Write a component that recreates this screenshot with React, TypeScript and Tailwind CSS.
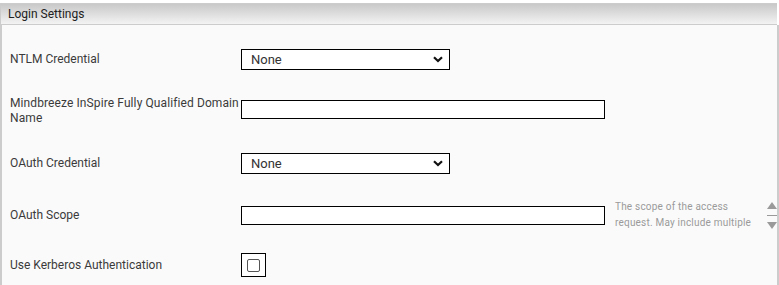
import React from "react";

const Chevron = () => (
  <svg width="10" height="7" viewBox="0 0 10 7" className="pointer-events-none absolute right-[6px] top-[6px]">
    <path d="M1 1.2 L5 5 L9 1.2" fill="none" stroke="#111" strokeWidth="2.2" />
  </svg>
);

const SelectBox = () => (
  <div className="relative flex h-[21px] w-[209px] items-center border border-black bg-white pl-[9px] text-[13px] leading-[19px] text-[#333]">
    None
    <Chevron />
  </div>
);

const TextBox = () => (
  <input type="text" className="h-[19px] w-[364px] border border-black bg-white outline-none" />
);

const Row = ({
  label,
  children,
  height = "h-[52px]",
}: {
  label: React.ReactNode;
  children: React.ReactNode;
  height?: string;
}) => (
  <div className={`flex items-center ${height}`}>
    <div className="w-[231px] shrink-0 text-[12px] leading-[15px] text-[#3a3a3a]">{label}</div>
    {children}
  </div>
);

export default function App() {
  return (
    <div className="h-[285px] w-[779px] bg-white font-['Roboto',sans-serif]">
      <div className="flex h-full flex-col pt-[3px]">
        <div className="mr-[2px] h-[22px] border-y border-l border-[#cccccc] bg-gradient-to-b from-[#c9c9c9] to-[#f3f3f3] pl-[7px] text-[12px] leading-[20px] text-[#222]">
          Login Settings
        </div>
        <div className="flex-1 overflow-hidden border-l-2 border-r-2 border-[#cccccc] bg-[#fafafa] pl-[8px] pt-[8px]">
          <Row label="NTLM Credential">
            <SelectBox />
          </Row>
          <Row
            label={
              <span className="-mt-[1px] block w-[240px] tracking-[0.1px]">
                Mindbreeze InSpire Fully Qualified Domain
                <br />
                Name
              </span>
            }
          >
            <div className="-mt-[4px]">
              <TextBox />
            </div>
          </Row>
          <Row label="OAuth Credential">
            <SelectBox />
          </Row>
          <Row label="OAuth Scope">
            <div className="flex items-center">
              <TextBox />
              <div className="ml-[10px] w-[138px] text-[10px] leading-[16px] tracking-[0.2px] text-[#9a9a9a]">
                The scope of the access request. May include multiple
              </div>
              <div className="ml-[14px] flex flex-col items-center gap-[6px]">
                <svg width="10" height="7" viewBox="0 0 10 7">
                  <path d="M5 0 L10 7 L0 7 Z" fill="#9a9a9a" />
                </svg>
                <div className="h-px w-[10px] bg-[#9a9a9a]" />
                <svg width="10" height="7" viewBox="0 0 10 7">
                  <path d="M0 0 L10 0 L5 7 Z" fill="#9a9a9a" />
                </svg>
              </div>
            </div>
          </Row>
          <Row label="Use Kerberos Authentication" height="h-[48px]">
            <div className="flex h-[24px] w-[25px] items-center justify-center border border-black bg-white">
              <div className="h-[13px] w-[13px] rounded-[2px] border border-[#555] bg-white" />
            </div>
          </Row>
        </div>
      </div>
    </div>
  );
}
